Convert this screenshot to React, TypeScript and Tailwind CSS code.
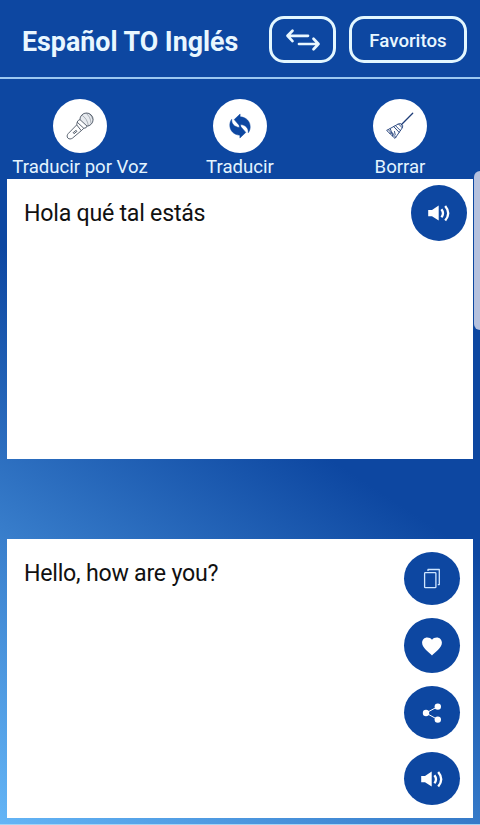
import { FC, ReactNode } from 'react';
import clsx from 'clsx';

const SwapIcon: FC = () => (
  <svg
    className="h-6 w-9"
    viewBox="0 0 36 24"
    fill="none"
    stroke="currentColor"
    strokeWidth="2.7"
    strokeLinecap="round"
    strokeLinejoin="round"
  >
    <path d="M23 7.8H3M7.5 2.8l-5 5 5 5.3" />
    <path d="M14 16h19.5M28.5 10.7l5 5.3-5 5.2" />
  </svg>
);

const MicIcon: FC = () => (
  <svg
    className="h-7 w-7"
    viewBox="0 0 28 28"
    fill="none"
    stroke="#4b5563"
    strokeWidth="0.9"
    strokeLinejoin="round"
  >
    <circle cx="20.5" cy="7.6" r="6.6" fill="#e8ebef" />
    <path
      d="M20 1.2c3 2.4 4.8 5.4 5 10.3M23.5 2.2c1.6 1.5 2.7 3.3 3.4 5.5M16 3.2c3.5 2.5 5.5 5.5 6.4 10.5"
      strokeWidth="0.4"
    />
    <path d="m12.3 8.4 1.7-.8 7 6.5-.9 1.6-2.3.6-6.7-6.2z" fill="#fff" />
    <path d="m11.2 10.2-.5 2.7-8.4 8.6c-1.4 1.5-1.6 3.3-.4 4.6 1.2 1.2 3.1 1.1 4.6 0l8.8-7.4 2.5-2.4" />
    <path d="m10.7 12.9 4.6 5.8M7.1 20.7l3-2.4.9 1-3 2.4z" />
  </svg>
);

const RefreshIcon: FC = () => (
  <svg
    className="h-[26px] w-6"
    viewBox="0 0 24 26"
    fill="#0d47a1"
    stroke="#0d47a1"
    strokeWidth="0.5"
  >
    <path d="M6.2 6.6 12.1 1v2.8c6.2.2 10.3 4.9 10.1 10.4-.1 2.2-.7 3.9-1.9 5.5.3-4.7-2.9-7.7-7.7-8.2V14z" />
    <path d="M17.8 19.4 11.9 25v-2.8C5.7 22 1.6 17.3 1.8 11.8c.1-2.2.7-3.9 1.9-5.5-.3 4.7 2.9 7.7 7.7 8.2V12z" />
  </svg>
);

const BroomIcon: FC = () => (
  <svg
    className="h-7 w-7"
    viewBox="0 0 28 28"
    fill="none"
    stroke="#1f3d78"
    strokeWidth="0.9"
    strokeLinejoin="round"
    strokeLinecap="round"
  >
    <path d="m26.7 1.3-11.4 11.5" strokeWidth="1.3" />
    <path d="m12.5 12 2-.5 2.3 2.2-.5 2.1L9 26.4.9 18.7z" />
    <path d="m9.5 13.7 5 5M7.8 14.7l5.3 5.6M2.5 17.9l7.1 7.2" />
    <path d="m4.3 16.9 1.4 3.6M3.7 21.2l2.8-.2M6.5 24l.5-2.4M8.5 19.5l.7 3.3M12.5 12l3.8 3.8" />
  </svg>
);

const SpeakerIcon: FC = () => (
  <svg className="h-5 w-6" viewBox="0 0 24 20" fill="#fff">
    <path d="M1.2 7H5l6.7-4.5v15L5 13.3H1.2z" />
    <path
      d="M14.4 6.2c2 2.5 2 5.5 0 8M18.2 2.9c3.8 4.6 3.8 10 0 14.6"
      fill="none"
      stroke="#fff"
      strokeWidth="2.3"
    />
  </svg>
);

const CopyIcon: FC = () => (
  <svg
    className="h-[22px] w-[18px]"
    viewBox="0 0 18 22"
    fill="none"
    stroke="#cfe6ff"
    strokeWidth="1.3"
    strokeLinejoin="round"
  >
    <rect x="1.6" y="4.7" width="11.3" height="15" rx="0.8" />
    <path d="M5 3V1.5h11.3v15.1h-1.5" />
  </svg>
);

const HeartIcon: FC = () => (
  <svg className="h-5 w-[22px]" viewBox="0 0 22 20" fill="#fff">
    <path d="M11 19.6C8.3 16.6 1.1 11.9 1.1 6.8c0-3.2 2.3-5.4 5.1-5.4 2 0 3.7.8 4.8 2.3 1.1-1.5 2.8-2.3 4.8-2.3 2.8 0 5.1 2.2 5.1 5.4 0 5.1-7.2 9.8-9.9 12.8z" />
  </svg>
);

const ShareIcon: FC = () => (
  <svg className="h-5 w-5" viewBox="0 0 20 20" fill="#fff">
    <path d="M15.8 3.6 4 10l11.8 6.6" fill="none" stroke="#fff" />
    <circle cx="4" cy="10" r="3.2" />
    <circle cx="15.8" cy="3.6" r="3.2" />
    <circle cx="15.8" cy="16.6" r="3.2" />
  </svg>
);

interface ActionProps {
  label: string;
  icon: ReactNode;
}

const Action: FC<ActionProps> = ({ label, icon }) => (
  <button type="button" className="flex w-40 flex-col items-center">
    <span className="flex size-[54px] items-center justify-center rounded-full bg-white">
      {icon}
    </span>
    <span className="mt-[3px] text-[18.6px] leading-[22px] whitespace-nowrap text-[#e3f4ff]">
      {label}
    </span>
  </button>
);

interface RoundButtonProps {
  label: string;
  className: string;
  children: ReactNode;
}

const RoundButton: FC<RoundButtonProps> = ({ label, className, children }) => (
  <button
    type="button"
    aria-label={label}
    className={clsx(
      'flex w-14 items-center justify-center rounded-[50%] bg-[#0d47a1]',
      className,
    )}
  >
    {children}
  </button>
);

const App: FC = () => {
  return (
    <div className="relative flex h-[825px] w-[480px] flex-col overflow-hidden border-b border-[#a3d3f5] bg-[linear-gradient(33deg,#64b5f6_0%,#0d47a1_51%)] font-['Roboto',sans-serif]">
      <header className="flex h-[79px] shrink-0 items-start border-b-2 border-[#9cc8f2] bg-[#0d47a1] pt-4 pl-[22px] text-[#e9f7ff]">
        <h1 className="w-[247px] text-[26.8px] leading-[52px] font-bold whitespace-nowrap">
          Español TO Inglés
        </h1>
        <button
          type="button"
          aria-label="Intercambiar idiomas"
          className="flex h-[47px] w-[67px] items-center justify-center rounded-[15px] border-3 border-[#e3f7ff]"
        >
          <SwapIcon />
        </button>
        <button
          type="button"
          className="ml-[13px] h-[47px] w-[118px] rounded-[15px] border-3 border-[#e3f7ff] pt-[3px] text-[18.7px] font-medium"
        >
          Favoritos
        </button>
      </header>

      <nav className="flex h-[100px] shrink-0 bg-[#0d47a1] pt-5">
        <Action label="Traducir por Voz" icon={<MicIcon />} />
        <Action label="Traducir" icon={<RefreshIcon />} />
        <Action label="Borrar" icon={<BroomIcon />} />
      </nav>

      <section className="mx-[7px] flex h-[280px] w-[466px] shrink-0 items-start justify-between bg-white pr-[6px] pl-[17px]">
        <p className="pt-[20px] text-[23.2px] leading-7 tracking-[-0.25px] text-[#111]">
          Hola qué tal estás
        </p>
        <RoundButton label="Escuchar" className="mt-[6px] h-14">
          <SpeakerIcon />
        </RoundButton>
      </section>

      <section className="mx-[7px] mt-20 flex h-[279px] w-[466px] shrink-0 items-start justify-between bg-white pr-[13px] pl-[17px]">
        <p className="pt-[20px] text-[23.2px] leading-7 tracking-[-0.25px] text-[#111]">
          Hello, how are you?
        </p>
        <div className="flex flex-col pt-[13px]">
          <RoundButton label="Copiar" className="h-[53px]">
            <CopyIcon />
          </RoundButton>
          <RoundButton label="Favorito" className="mt-[13px] h-[55px]">
            <HeartIcon />
          </RoundButton>
          <RoundButton label="Compartir" className="mt-[13px] h-[53px]">
            <ShareIcon />
          </RoundButton>
          <RoundButton label="Escuchar" className="mt-[13px] h-[53px]">
            <SpeakerIcon />
          </RoundButton>
        </div>
      </section>

      {/* edge panel handle */}
      <div className="absolute top-[171px] right-0 h-[159px] w-[6px] rounded-l-[6px] bg-[#b5c1de]" />
    </div>
  );
};

export default App;
